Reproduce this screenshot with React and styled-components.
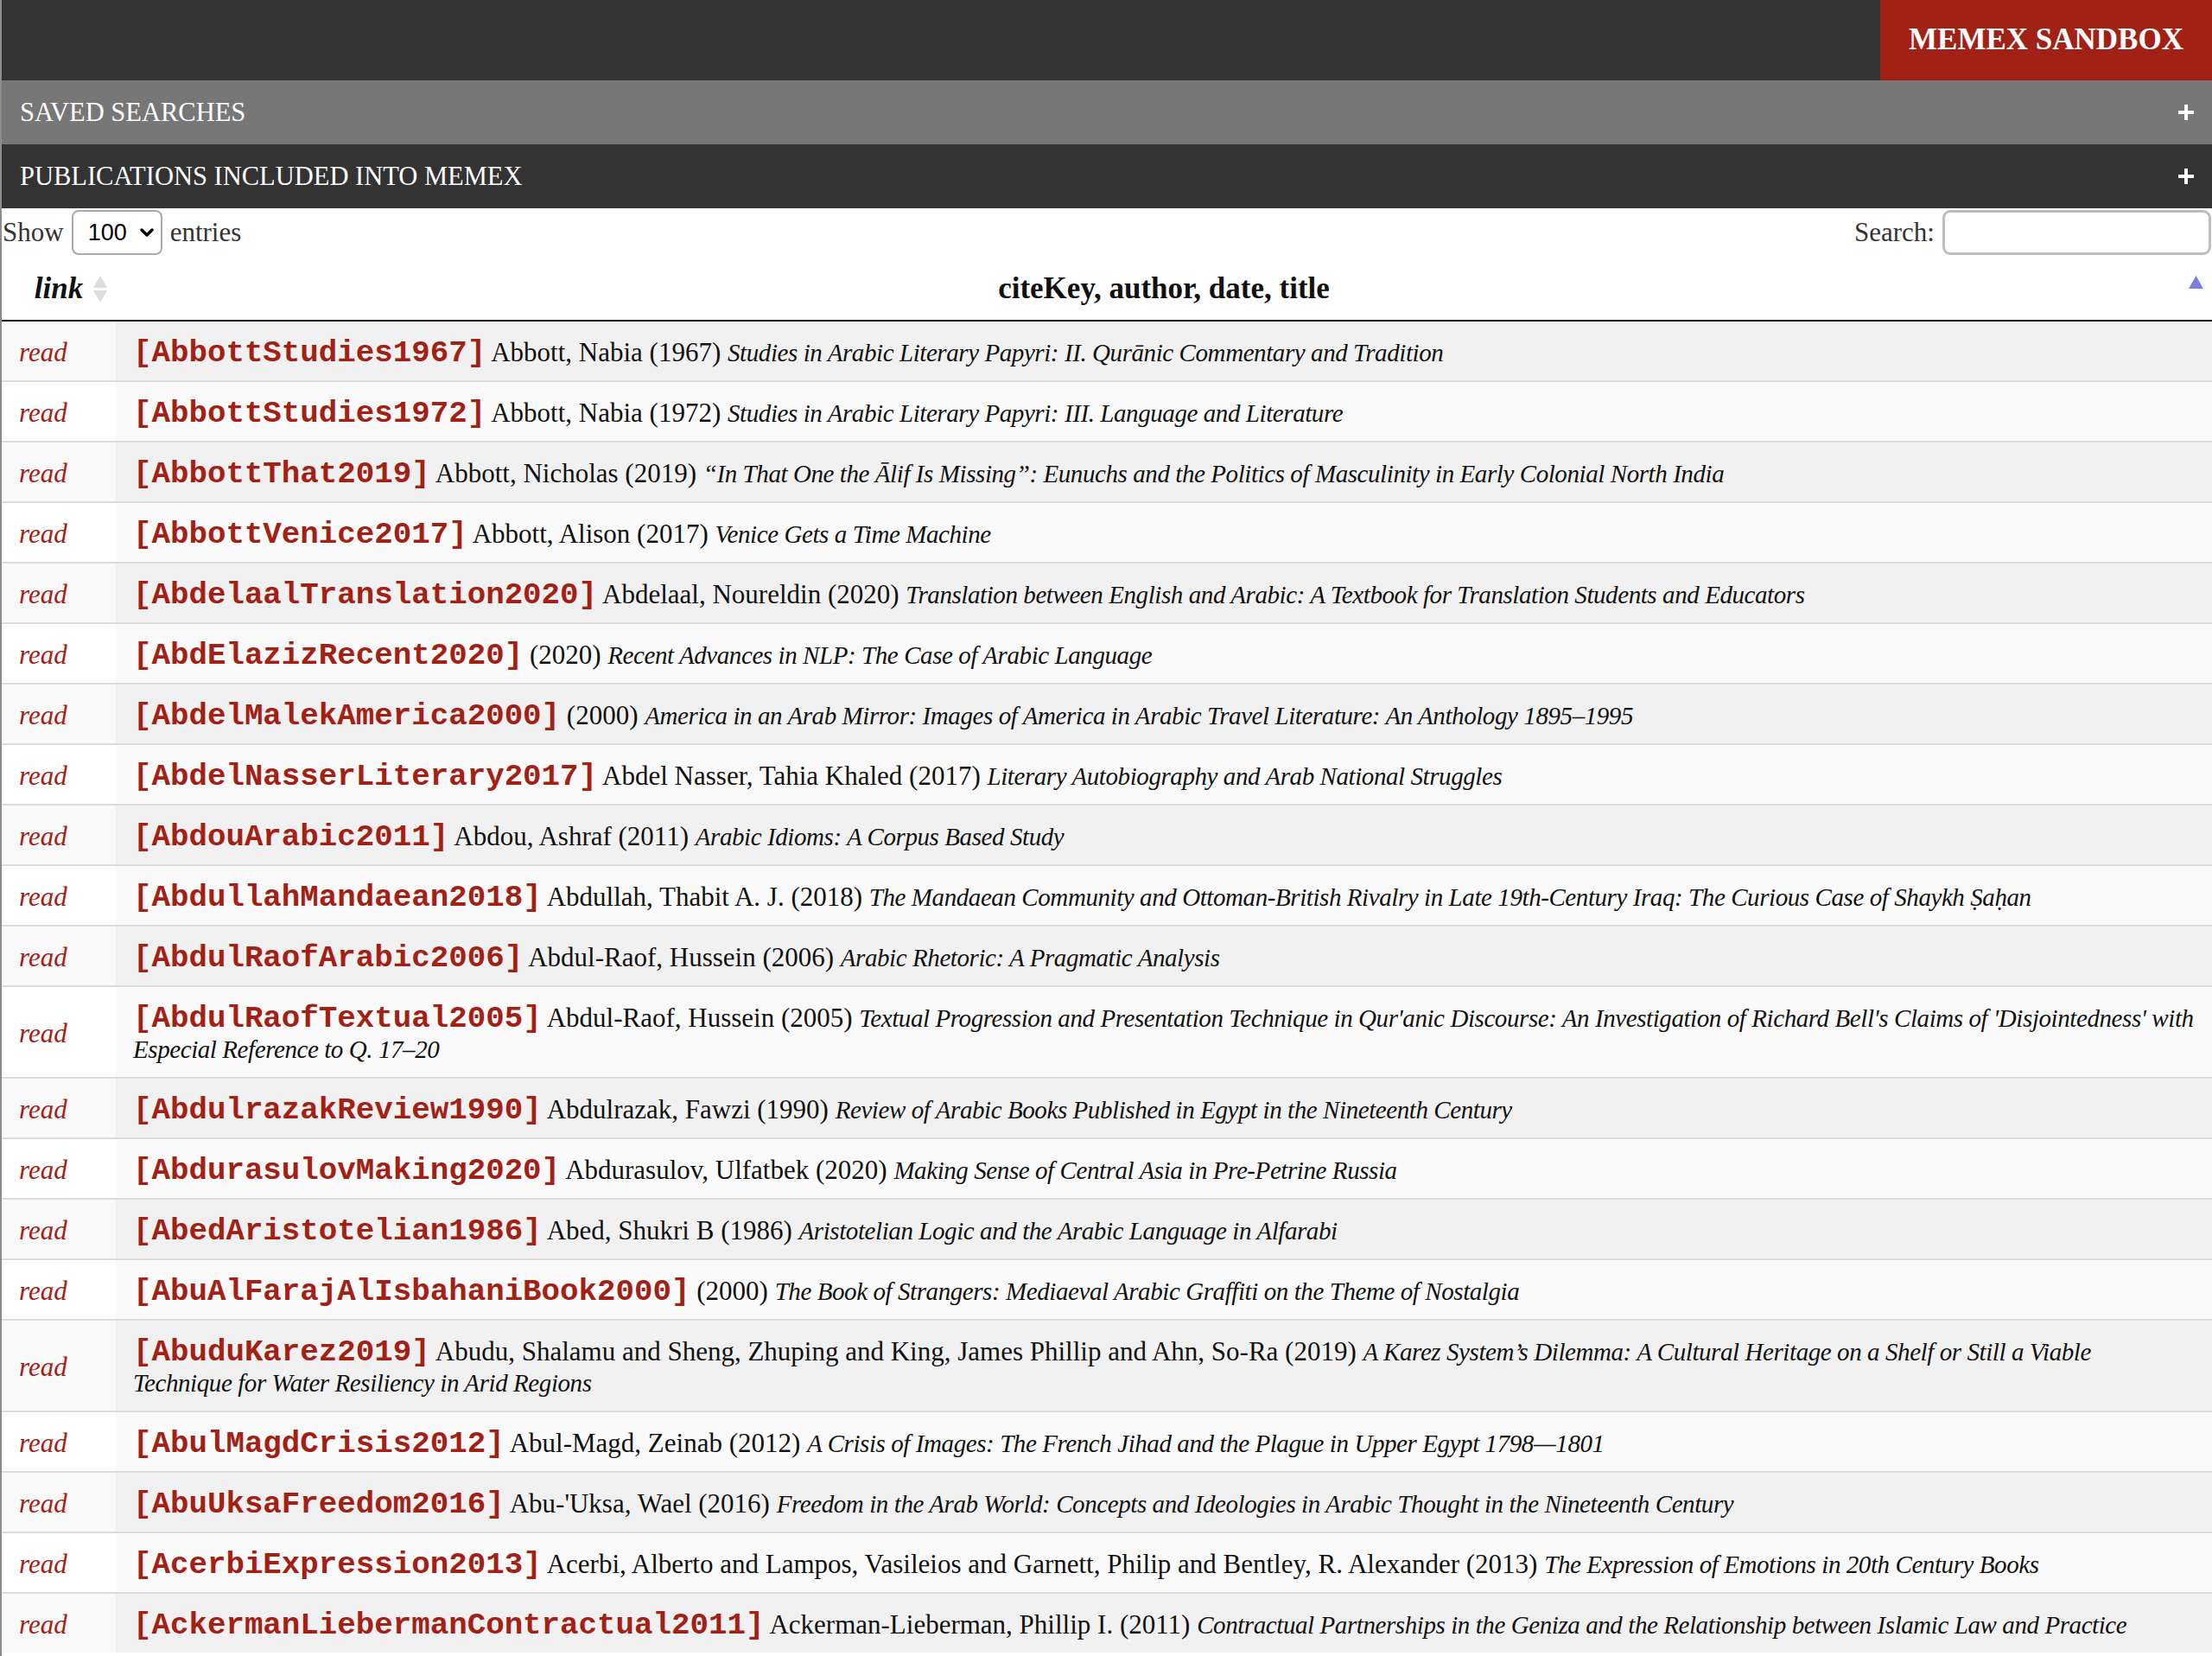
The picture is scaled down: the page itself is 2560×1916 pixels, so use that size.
import React from "react";
import styled, { createGlobalStyle } from "styled-components";

const GlobalStyle = createGlobalStyle`
  html, body { margin: 0; padding: 0; background: #fff; }
  body {
    font-family: "Liberation Serif", "Times New Roman", serif;
    color: #111;
    font-size: 31px;
  }
  * { box-sizing: border-box; }
`;

const RED = "#a32014";

const rows = [
  ["AbbottStudies1967", "Abbott, Nabia (1967)", "Studies in Arabic Literary Papyri: II. Qurānic Commentary and Tradition"],
  ["AbbottStudies1972", "Abbott, Nabia (1972)", "Studies in Arabic Literary Papyri: III. Language and Literature"],
  ["AbbottThat2019", "Abbott, Nicholas (2019)", "“In That One the Ālif Is Missing”: Eunuchs and the Politics of Masculinity in Early Colonial North India"],
  ["AbbottVenice2017", "Abbott, Alison (2017)", "Venice Gets a Time Machine"],
  ["AbdelaalTranslation2020", "Abdelaal, Noureldin (2020)", "Translation between English and Arabic: A Textbook for Translation Students and Educators"],
  ["AbdElazizRecent2020", "(2020)", "Recent Advances in NLP: The Case of Arabic Language"],
  ["AbdelMalekAmerica2000", "(2000)", "America in an Arab Mirror: Images of America in Arabic Travel Literature: An Anthology 1895–1995"],
  ["AbdelNasserLiterary2017", "Abdel Nasser, Tahia Khaled (2017)", "Literary Autobiography and Arab National Struggles"],
  ["AbdouArabic2011", "Abdou, Ashraf (2011)", "Arabic Idioms: A Corpus Based Study"],
  ["AbdullahMandaean2018", "Abdullah, Thabit A. J. (2018)", "The Mandaean Community and Ottoman-British Rivalry in Late 19th-Century Iraq: The Curious Case of Shaykh Ṣaḥan"],
  ["AbdulRaofArabic2006", "Abdul-Raof, Hussein (2006)", "Arabic Rhetoric: A Pragmatic Analysis"],
  ["AbdulRaofTextual2005", "Abdul-Raof, Hussein (2005)", "Textual Progression and Presentation Technique in Qur'anic Discourse: An Investigation of Richard Bell's Claims of 'Disjointedness' with Especial Reference to Q. 17–20"],
  ["AbdulrazakReview1990", "Abdulrazak, Fawzi (1990)", "Review of Arabic Books Published in Egypt in the Nineteenth Century"],
  ["AbdurasulovMaking2020", "Abdurasulov, Ulfatbek (2020)", "Making Sense of Central Asia in Pre-Petrine Russia"],
  ["AbedAristotelian1986", "Abed, Shukri B (1986)", "Aristotelian Logic and the Arabic Language in Alfarabi"],
  ["AbuAlFarajAlIsbahaniBook2000", "(2000)", "The Book of Strangers: Mediaeval Arabic Graffiti on the Theme of Nostalgia"],
  ["AbuduKarez2019", "Abudu, Shalamu and Sheng, Zhuping and King, James Phillip and Ahn, So-Ra (2019)", "A Karez System’s Dilemma: A Cultural Heritage on a Shelf or Still a Viable Technique for Water Resiliency in Arid Regions"],
  ["AbulMagdCrisis2012", "Abul-Magd, Zeinab (2012)", "A Crisis of Images: The French Jihad and the Plague in Upper Egypt 1798—1801"],
  ["AbuUksaFreedom2016", "Abu-'Uksa, Wael (2016)", "Freedom in the Arab World: Concepts and Ideologies in Arabic Thought in the Nineteenth Century"],
  ["AcerbiExpression2013", "Acerbi, Alberto and Lampos, Vasileios and Garnett, Philip and Bentley, R. Alexander (2013)", "The Expression of Emotions in 20th Century Books"],
  ["AckermanLiebermanContractual2011", "Ackerman-Lieberman, Phillip I. (2011)", "Contractual Partnerships in the Geniza and the Relationship between Islamic Law and Practice"],
];

const Page = styled.div`
  border-left: 2px solid #8c8c8c;
  min-height: 100vh;
`;

const TopBar = styled.header`
  display: flex;
  justify-content: flex-end;
  height: 93px;
  background: #333;
`;

const Brand = styled.div`
  width: 384px;
  background: #a22117;
  color: #fff;
  font-weight: 700;
  font-size: 35px;
  display: flex;
  align-items: center;
  justify-content: center;
  padding-bottom: 2px;
`;

const Accordion = styled.div`
  display: flex;
  align-items: center;
  justify-content: space-between;
  height: 74px;
  padding: 0 21px 0 21px;
  background: ${(p) => (p.$tone === "gray" ? "#777" : "#333")};
  color: #fff;
  font-size: 30.5px;
`;

const Controls = styled.div`
  display: flex;
  align-items: center;
  justify-content: space-between;
  height: 56px;
  color: #333;
`;

const LengthLabel = styled.label`
  display: flex;
  align-items: center;
  gap: 9px;
  padding-left: 1px;
`;

const SelectWrap = styled.span`
  position: relative;
  display: inline-flex;
`;

const Select = styled.select`
  appearance: none;
  -webkit-appearance: none;
  width: 105px;
  height: 52px;
  border: 2px solid #aaa;
  border-radius: 8px;
  background: #fff;
  font-family: "Liberation Sans", Arial, sans-serif;
  font-size: 27px;
  color: #000;
  padding: 0 0 0 17px;
`;

const Chevron = styled.svg`
  position: absolute;
  right: 10px;
  top: 21px;
  pointer-events: none;
`;

const SearchLabel = styled.label`
  display: flex;
  align-items: center;
  gap: 9px;
`;

const SearchInput = styled.input`
  width: 311px;
  height: 52px;
  border: 3px solid #bdbdbd;
  border-radius: 9px;
  background: #fff;
  margin-right: 1px;
`;

const Table = styled.table`
  width: 100%;
  border-collapse: separate;
  border-spacing: 0;
  table-layout: fixed;
`;

const Th = styled.th`
  position: relative;
  padding: 20px 20px;
  line-height: 33px;
  font-size: 35px;
  font-weight: 700;
  font-style: ${(p) => (p.$italic ? "italic" : "normal")};
  text-align: center;
  border-bottom: 2px solid #111;
  width: ${(p) => p.$width || "auto"};
`;

const SortIcon = styled.svg`
  position: absolute;
  right: ${(p) => p.$right}px;
  top: 22px;
`;

const Tr = styled.tr`
  background: ${(p) => (p.$odd ? "#f9f9f9" : "#fff")};
`;

const LinkCell = styled.td`
  padding: 18px 20px 14px;
  line-height: 36px;
  vertical-align: middle;
  font-size: 31px;
  border-top: ${(p) => (p.$first ? "none" : "2px solid #ddd")};
`;

const MainCell = styled.td`
  padding: 18px 20px 14px 20px;
  line-height: 36px;
  vertical-align: middle;
  background: ${(p) => (p.$odd ? "#f1f1f1" : "#fafafa")};
  border-top: ${(p) => (p.$first ? "none" : "2px solid #ddd")};
`;

const ReadLink = styled.a`
  color: ${RED};
  font-style: italic;
  text-decoration: none;
`;

const CiteKey = styled.code`
  font-family: "Liberation Mono", "Courier New", monospace;
  font-weight: 700;
  font-size: 35.8px;
  line-height: 30px;
  color: ${RED};
`;

const Title = styled.em`
  font-style: italic;
  font-size: 29px;
  line-height: 28px;
  letter-spacing: -0.42px;
`;

function Plus() {
  return (
    <svg width="18" height="18" viewBox="0 0 18 18" aria-hidden="true">
      <rect x="7" y="0" width="4" height="18" fill="#fff" />
      <rect x="0" y="7" width="18" height="4" fill="#fff" />
    </svg>
  );
}

export default function App() {
  return (
    <>
      <GlobalStyle />
      <Page>
        <TopBar>
          <Brand>MEMEX SANDBOX</Brand>
        </TopBar>
        <Accordion $tone="gray">
          <span>SAVED SEARCHES</span>
          <Plus />
        </Accordion>
        <Accordion $tone="dark">
          <span>PUBLICATIONS INCLUDED INTO MEMEX</span>
          <Plus />
        </Accordion>
        <Controls>
          <LengthLabel>
            Show
            <SelectWrap>
              <Select defaultValue="100">
                <option value="10">10</option>
                <option value="25">25</option>
                <option value="50">50</option>
                <option value="100">100</option>
              </Select>
              <Chevron width="16" height="11" viewBox="0 0 16 11">
                <path d="M2 2 L8 8 L14 2" fill="none" stroke="#000" strokeWidth="3.5" strokeLinecap="round" strokeLinejoin="round" />
              </Chevron>
            </SelectWrap>
            entries
          </LengthLabel>
          <SearchLabel>
            Search:
            <SearchInput type="search" />
          </SearchLabel>
        </Controls>
        <Table>
          <thead>
            <tr>
              <Th $italic $width="132px">
                link
                <SortIcon $right={9} width="18" height="31" viewBox="0 0 18 31">
                  <path d="M9 0 L17 14 L1 14 Z" fill="#ddd" />
                  <path d="M1 17 L17 17 L9 31 Z" fill="#ddd" />
                </SortIcon>
              </Th>
              <Th>
                citeKey, author, date, title
                <SortIcon $right={10} width="17" height="15" viewBox="0 0 17 15">
                  <path d="M8.5 0 L17 15 L0 15 Z" fill="#7c80dc" />
                </SortIcon>
              </Th>
            </tr>
          </thead>
          <tbody>
            {rows.map(([key, author, title], i) => {
              const odd = i % 2 === 0;
              return (
                <Tr key={key} $odd={odd}>
                  <LinkCell $first={i === 0}>
                    <ReadLink href="#">read</ReadLink>
                  </LinkCell>
                  <MainCell $odd={odd} $first={i === 0}>
                    <CiteKey>[{key}]</CiteKey> {author} <Title>{title}</Title>
                  </MainCell>
                </Tr>
              );
            })}
          </tbody>
        </Table>
      </Page>
    </>
  );
}
